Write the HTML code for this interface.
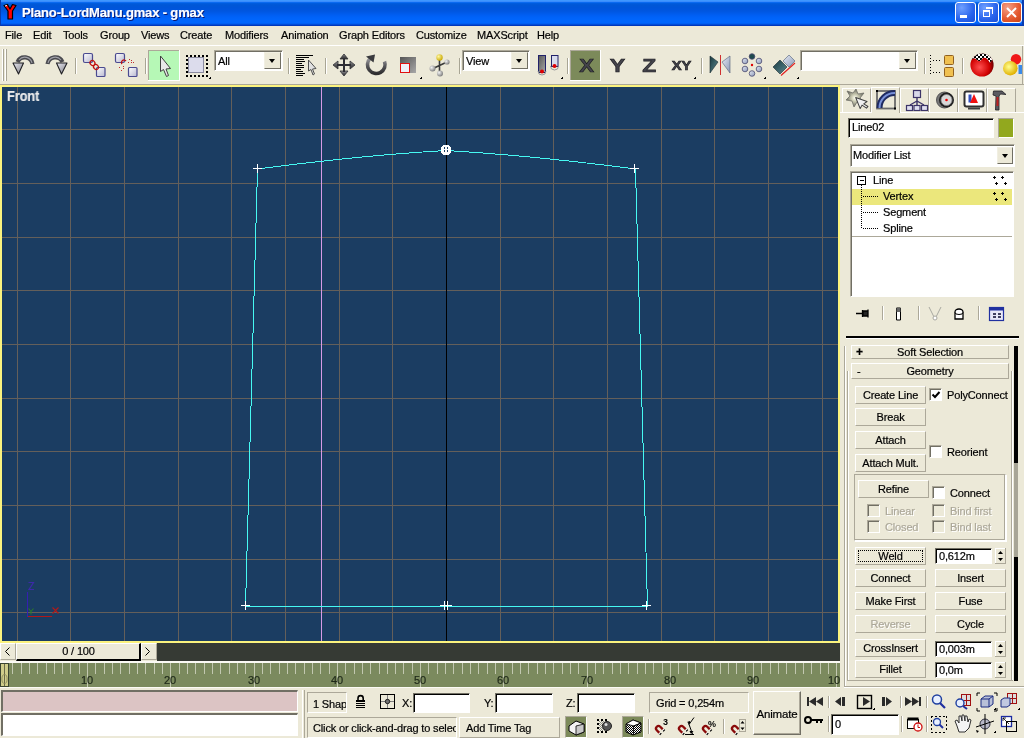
<!DOCTYPE html>
<html><head><meta charset="utf-8"><style>
*{margin:0;padding:0;box-sizing:border-box}
html,body{width:1024px;height:738px;overflow:hidden;background:#ECE9D8;font-family:"Liberation Sans",sans-serif;font-size:11px;color:#000;position:relative;letter-spacing:-0.15px;-webkit-text-stroke:0.2px currentColor}
.a{position:absolute}
.tx{position:absolute;white-space:nowrap;line-height:12px;will-change:transform}
#title{left:0;top:0;width:1024px;height:26px;background:linear-gradient(#3f97ff 0px,#3f97ff 1px,#3a8cfc 1px,#3a8cfc 2px,#0a6af0 2px,#0a6af0 3px,#005ee0 3px,#0057d6 5px,#0055da 8px,#0056e0 11px,#005ae9 13px,#005ef2 15px,#0062f8 17px,#0066fd 20px,#0066fd 23px,#0058e8 24px,#0040c8 25px,#002fb0 26px)}
.wb{top:2px;width:21px;height:21px;border:1px solid #fff;border-radius:3px}
.dd{position:absolute;background:#fff;border-style:solid;border-width:1px;border-color:#aca899 #fff #fff #aca899;box-shadow:inset 1px 1px 0 #716f64}
.ddb{position:absolute;top:1px;right:1px;bottom:1px;width:17px;background:#ECE9D8;border-style:solid;border-width:1px;border-color:#f1efe2 #716f64 #716f64 #f1efe2}
.ddb:after{content:"";position:absolute;left:4px;top:6px;border-style:solid;border-width:4px 3.5px 0 3.5px;border-color:#000 transparent transparent transparent}
.bt{position:absolute;background:#ECE9D8;border-style:solid;border-width:1px;border-color:#fff #aca899 #aca899 #fff;text-align:center;line-height:16px;white-space:nowrap;will-change:transform}
.fld{position:absolute;background:#fff;border-style:solid;border-width:1px;border-color:#716f64 #fff #fff #716f64;box-shadow:inset 1px 1px 0 #000;white-space:nowrap;line-height:14px;padding-left:3px;will-change:transform}
.cb{position:absolute;width:13px;height:13px;background:#fff;border-style:solid;border-width:1px;border-color:#aca899 #fff #fff #aca899;box-shadow:inset 1px 1px 0 #716f64}
.cbd{background:#ECE9D8}
.dis{color:#aca899;text-shadow:1px 1px 0 #fff}
</style></head><body>
<div id="title" class="a">
<div class="a" style="left:0;top:0;width:1px;height:26px;background:#0a3cb0"></div>
<div class="a" style="right:0;top:0;width:2px;height:26px;background:#0a3cb0"></div>
<svg class="a" style="left:2px;top:3px" width="17" height="18" viewBox="0 0 17 18"><path d="M2 2.5 L5.5 1.5 L8 6 L10.5 1.5 L14 2.5 L10.5 8 L10.5 16 L6 16 L6 8 Z" fill="#ff0000" stroke="#000" stroke-width="1.2" stroke-linejoin="round"/><path d="M3 3 L5 2.5" stroke="#fff" stroke-width="1"/></svg>
<div class="tx" style="left:22px;top:6px;color:#fff;font-weight:bold;font-size:13px;line-height:14px;text-shadow:1px 1px 0 #0a1870">Plano-LordManu.gmax - gmax</div>
<div class="a wb" style="left:955px;background:radial-gradient(circle at 30% 25%,#6fa0ff,#2863ec 60%,#1a50d8)"><div class="a" style="left:4px;top:12px;width:7px;height:3px;background:#fff"></div></div>
<div class="a wb" style="left:978px;background:radial-gradient(circle at 30% 25%,#6fa0ff,#2863ec 60%,#1a50d8)"><div class="a" style="left:4px;top:7px;width:7px;height:7px;border:1px solid #fff;border-top-width:2px"></div><div class="a" style="left:7px;top:4px;width:7px;height:7px;border:1px solid #fff;border-top-width:2px;border-left:none;border-bottom:none"></div></div>
<div class="a wb" style="left:1001px;background:radial-gradient(circle at 30% 25%,#f4a088,#e4582e 60%,#c84418)"><svg class="a" style="left:3px;top:3px" width="13" height="13"><path d="M2 2L11 11M11 2L2 11" stroke="#fff" stroke-width="2"/></svg></div>
</div>

<div class="a" style="left:0;top:45px;width:1024px;height:1px;background:#fff"></div>
<div class="tx" style="left:5px;top:29px">File</div>
<div class="tx" style="left:33px;top:29px">Edit</div>
<div class="tx" style="left:63px;top:29px">Tools</div>
<div class="tx" style="left:100px;top:29px">Group</div>
<div class="tx" style="left:141px;top:29px">Views</div>
<div class="tx" style="left:180px;top:29px">Create</div>
<div class="tx" style="left:225px;top:29px">Modifiers</div>
<div class="tx" style="left:281px;top:29px">Animation</div>
<div class="tx" style="left:339px;top:29px">Graph Editors</div>
<div class="tx" style="left:416px;top:29px">Customize</div>
<div class="tx" style="left:477px;top:29px">MAXScript</div>
<div class="tx" style="left:537px;top:29px">Help</div>

<svg class="a" style="left:0;top:0" width="1024" height="86">
<defs>
<linearGradient id="gd" x1="0" y1="0" x2="0" y2="1"><stop offset="0" stop-color="#9a9a9e"/><stop offset=".5" stop-color="#56565a"/><stop offset="1" stop-color="#2e2e30"/></linearGradient>
<linearGradient id="gbox" x1="0" y1="0" x2="1" y2="1"><stop offset="0" stop-color="#fff"/><stop offset="1" stop-color="#b8b8d0"/></linearGradient>
<linearGradient id="gsc" x1="0" y1="0" x2="1" y2="1"><stop offset="0" stop-color="#555"/><stop offset="1" stop-color="#a8a8a8"/></linearGradient>
<radialGradient id="gball" cx=".35" cy=".35" r=".7"><stop offset="0" stop-color="#f4f4f4"/><stop offset="1" stop-color="#7a7a7a"/></radialGradient>
<radialGradient id="gyb" cx=".35" cy=".35" r=".7"><stop offset="0" stop-color="#fff7a0"/><stop offset="1" stop-color="#c8a800"/></radialGradient>
<radialGradient id="gred" cx=".4" cy=".6" r=".6"><stop offset="0" stop-color="#ff5050"/><stop offset=".7" stop-color="#d00000"/><stop offset="1" stop-color="#700000"/></radialGradient>
<radialGradient id="gylw" cx=".4" cy=".4" r=".6"><stop offset="0" stop-color="#ffff90"/><stop offset="1" stop-color="#e0b000"/></radialGradient>
<linearGradient id="gteal" x1="0" y1="0" x2="1" y2="1"><stop offset="0" stop-color="#1a3a40"/><stop offset="1" stop-color="#5a8890"/></linearGradient>
<linearGradient id="glb" x1="0" y1="0" x2="1" y2="1"><stop offset="0" stop-color="#e8ecf4"/><stop offset="1" stop-color="#8a98b8"/></linearGradient>
</defs>
<g shape-rendering="crispEdges">
<path d="M2.5 49V81M5.5 49V81" stroke="#fff"/><path d="M3.5 49V81M6.5 49V81" stroke="#a8a594"/>
<path d="M75.5 58V74M145.5 58V74M288.5 58V74M325.5 58V74M459.5 58V74M567.5 58V74M701.5 58V74M924.5 58V74M962.5 58V74" stroke="#a8a594"/>
<path d="M76.5 58V74M146.5 58V74M289.5 58V74M326.5 58V74M460.5 58V74M568.5 58V74M702.5 58V74M925.5 58V74M963.5 58V74" stroke="#fff"/>
<rect x="148" y="50" width="32" height="31" fill="#fff"/><rect x="148" y="50" width="31" height="30" fill="#aca899"/><rect x="149" y="51" width="30" height="29" fill="#b6f8b6"/>
<rect x="570" y="50" width="31" height="31" fill="#fff"/><rect x="570" y="50" width="30" height="30" fill="#aca899"/><rect x="571" y="51" width="29" height="29" fill="#7c8a5a"/>
</g>
<!-- undo / redo -->
<defs>
<linearGradient id="garcR" x1="0" y1="0" x2="1" y2="0"><stop offset="0" stop-color="#36363c"/><stop offset=".7" stop-color="#9a9aa2"/><stop offset="1" stop-color="#c8c8d0"/></linearGradient>
<linearGradient id="garcL" x1="1" y1="0" x2="0" y2="0"><stop offset="0" stop-color="#36363c"/><stop offset=".7" stop-color="#9a9aa2"/><stop offset="1" stop-color="#c8c8d0"/></linearGradient>
<linearGradient id="ghead" x1="0" y1="0" x2="1" y2="1"><stop offset="0" stop-color="#e8e8f0"/><stop offset="1" stop-color="#808088"/></linearGradient>
</defs>
<path d="M47.5 64 A7.9 7.9 0 0 1 62.5 62" fill="none" stroke="#4a4a50" stroke-width="4.2"/><path d="M48 63 A7.4 7.4 0 0 1 61 60" fill="none" stroke="#a0a0a8" stroke-width="1.1"/>
<path d="M56.5 63 L67 63 L61.5 74 Z" fill="url(#ghead)" stroke="#202024" stroke-width="1.1" stroke-linejoin="round"/>
<path d="M32.5 64 A7.9 7.9 0 0 0 17.5 62" fill="none" stroke="#4a4a50" stroke-width="4.2"/><path d="M32 63 A7.4 7.4 0 0 0 19 60" fill="none" stroke="#a0a0a8" stroke-width="1.1"/>
<path d="M23.5 63 L13 63 L18.5 74 Z" fill="url(#ghead)" stroke="#202024" stroke-width="1.1" stroke-linejoin="round"/>
<!-- link -->
<g stroke="#4a4a90" stroke-width="1.2">
<rect x="83.5" y="53.5" width="9" height="9" rx="1.5" fill="url(#gbox)"/>
<rect x="96.5" y="67.5" width="8.5" height="9" rx="1" fill="url(#gbox)"/>
<rect x="115.5" y="53.5" width="9" height="9" rx="1.5" fill="url(#gbox)"/>
<rect x="128.5" y="67.5" width="8.5" height="9" rx="1" fill="url(#gbox)"/>
</g>
<g fill="none" stroke="#c01010" stroke-width="1.3">
<ellipse cx="92.5" cy="63" rx="2.3" ry="2.6" transform="rotate(-45 92.5 63)"/>
<ellipse cx="96" cy="67" rx="2.3" ry="2.6" transform="rotate(-45 96 67)"/>
<path d="M122 64 A2.5 2.5 0 0 1 126 61"/>
</g>
<g fill="#c03030"><rect x="129" y="59" width="1" height="1"/><rect x="131" y="60" width="1" height="1"/><rect x="128" y="62" width="1" height="1"/><rect x="131" y="62" width="1" height="1"/><rect x="133" y="62" width="1" height="1"/><rect x="119" y="67" width="1" height="1"/><rect x="123" y="66" width="1" height="1"/><rect x="123" y="68" width="1" height="1"/><rect x="121" y="70" width="1" height="1"/></g>
<!-- select arrow -->
<path d="M160.5 56 L160.5 71.5 L163.5 69.5 L166.5 76.5 L168.5 75.5 L166 69 L170.5 68.5 Z" fill="#e8e8e8" stroke="#404040" stroke-width="1" stroke-linejoin="round"/>
<!-- region select -->
<rect x="188.5" y="57.5" width="15" height="15" fill="#dcdcec" stroke="#8c8ca0"/>
<g fill="#000" shape-rendering="crispEdges">
<path d="M186 55h2v2h-2zM190 55h2v2h-2zM194 55h2v2h-2zM198 55h2v2h-2zM202 55h2v2h-2zM206 55h2v2h-2zM186 75h2v2h-2zM190 75h2v2h-2zM194 75h2v2h-2zM198 75h2v2h-2zM202 75h2v2h-2zM206 75h2v2h-2zM186 59h2v2h-2zM186 63h2v2h-2zM186 67h2v2h-2zM186 71h2v2h-2zM206 59h2v2h-2zM206 63h2v2h-2zM206 67h2v2h-2zM206 71h2v2h-2z"/>
<path d="M209 79h2v-2h-1v1h-1z"/>
<path d="M420 79h2v-2h-1v1h-1z"/><path d="M561 79h2v-2h-1v1h-1z"/><path d="M694 79h2v-2h-1v1h-1z"/><path d="M764 79h2v-2h-1v1h-1z"/><path d="M797 79h2v-2h-1v1h-1z"/>
</g>
<!-- select by name -->
<g fill="#000" shape-rendering="crispEdges">
<rect x="296" y="55" width="17" height="1"/><rect x="296" y="57" width="13" height="1"/><rect x="296" y="59" width="8" height="1"/><rect x="296" y="61" width="9" height="1"/><rect x="296" y="63" width="6" height="1"/><rect x="296" y="65" width="8" height="1"/><rect x="296" y="67" width="8" height="1"/><rect x="296" y="69" width="5" height="1"/><rect x="296" y="71" width="7" height="1"/><rect x="296" y="73" width="9" height="1"/><rect x="296" y="75" width="7" height="1"/>
</g>
<path d="M308.5 60 L308.5 71 L311 69.5 L313 75 L314.5 74 L312.5 69 L316 68.5 Z" fill="#e0e0e0" stroke="#505050" stroke-width="1" stroke-linejoin="round"/>
<!-- move -->
<g fill="url(#gd)" stroke="#303034" stroke-width=".8">
<path d="M344 54 L348 59 L340 59 Z"/><path d="M344 76 L348 71 L340 71 Z"/><path d="M333 65 L338 61 L338 69 Z"/><path d="M355 65 L350 61 L350 69 Z"/>
</g>
<path d="M343 58h2v14h-2zM337 64h14v2h-14z" fill="#2e2e34"/>
<!-- rotate -->
<path d="M384.5 61.5 A8.8 8.8 0 1 1 370 58.5" fill="none" stroke="url(#gd)" stroke-width="3.6"/>
<path d="M366 56.5 L375 54.5 L373.5 62.5 Z" fill="#3a3a3e"/>
<!-- scale -->
<rect x="400" y="57" width="16" height="16" fill="url(#gsc)"/>
<rect x="400.5" y="63.5" width="9" height="9" fill="#eef0f8" stroke="#e01010"/>
<!-- pivot -->
<path d="M439.5 58 L439.5 73 M433 68.5 L447 62" stroke="#3a3a3a" stroke-width="1.6"/>
<circle cx="439.5" cy="57.5" r="3.2" fill="url(#gyb)"/>
<circle cx="447" cy="62" r="2.6" fill="url(#gball)"/>
<circle cx="432.5" cy="68.5" r="3" fill="url(#gball)"/>
<circle cx="440" cy="73.5" r="3" fill="url(#gball)"/>
<!-- use center -->
<rect x="538.5" y="55.5" width="7" height="17" fill="url(#gsc)" stroke="#22226a"/>
<rect x="551.5" y="55.5" width="6.5" height="11" fill="#d8dcec" stroke="#22226a"/>
<circle cx="542" cy="71.5" r="2" fill="#e00000"/><circle cx="554.5" cy="66" r="2" fill="#e00000"/>
<path d="M538 71 A4 4 0 0 0 546 71" fill="none" stroke="#999" /><path d="M550.5 66 A4 4 0 0 0 558.5 66" fill="none" stroke="#999"/>
<!-- XYZ -->
<g font-family="Liberation Sans" font-weight="bold" fill="#44444c" stroke="#1c1c20" stroke-width=".6">
<text transform="translate(579.3 72.3) scale(1.17 1)" font-size="19">X</text>
<text transform="translate(609.8 72.3) scale(1.22 1)" font-size="19">Y</text>
<text transform="translate(642.2 72.3) scale(1.2 1)" font-size="19">Z</text>
<text transform="translate(671.7 69.6) scale(1.12 1)" font-size="13.2">XY</text>
</g>
<!-- mirror -->
<path d="M710 56 L718 62 L710 73 Z" fill="url(#gteal)" stroke="#1a2a30" stroke-width=".6"/>
<path d="M730 56 L722 62 L730 73 Z" fill="url(#glb)" stroke="#50607a" stroke-width=".6"/>
<path d="M720.5 55V75" stroke="#d03030" stroke-width="1"/>
<!-- array -->
<g stroke="#4a4a70" stroke-width=".8">
<circle cx="752" cy="56.5" r="2.8" fill="#1f4a4e"/>
<circle cx="745" cy="61" r="2.8" fill="url(#glb)"/><circle cx="759" cy="61" r="2.8" fill="url(#glb)"/>
<circle cx="745" cy="69" r="2.8" fill="url(#glb)"/><circle cx="759" cy="69" r="2.8" fill="url(#glb)"/>
<circle cx="752" cy="73.5" r="2.8" fill="url(#glb)"/>
</g>
<circle cx="752" cy="65" r="1.2" fill="#e00000"/>
<!-- align -->
<path d="M773 67 L780 60 L787 67 L780 74 Z" fill="url(#gteal)" stroke="#1a2a30" stroke-width=".6"/>
<path d="M783 61 L789 55 L795 61 L789 67 Z" fill="url(#glb)" stroke="#50607a" stroke-width=".6"/>
<path d="M781 75.5 L795 63" stroke="#e02020" stroke-width="1.2"/>
<!-- schematic -->
<g fill="#000" shape-rendering="crispEdges">
<path d="M930 55h1v1h-1zM930 58h1v1h-1zM930 61h1v1h-1zM930 64h1v1h-1zM930 67h1v1h-1zM930 70h1v1h-1zM930 73h1v1h-1zM933 60h1v1h-1zM936 60h1v1h-1zM939 60h1v1h-1zM933 72h1v1h-1zM936 72h1v1h-1zM939 72h1v1h-1z"/>
</g>
<rect x="944.5" y="55.5" width="9" height="9" rx="1" fill="#f0c050" stroke="#906020"/>
<rect x="944.5" y="67.5" width="9" height="9" rx="1" fill="#f0c050" stroke="#906020"/>
<!-- material editor -->
<defs><clipPath id="cmat"><path d="M968 52 H996 V60 Q992 58 990 63 Q987 57 983 58 Q980 63 977 60 Q974 56 970 61 H968 Z"/></clipPath>
<clipPath id="csph"><circle cx="982" cy="65" r="11.5"/></clipPath></defs>
<circle cx="982" cy="65" r="11.6" fill="url(#gred)"/>
<g clip-path="url(#csph)"><g clip-path="url(#cmat)"><rect x="968" y="50" width="30" height="14" fill="#fff"/><path d="M970 52h2v2h-2zM974 52h2v2h-2zM978 52h2v2h-2zM982 52h2v2h-2zM986 52h2v2h-2zM990 52h2v2h-2zM994 52h2v2h-2zM972 54h2v2h-2zM976 54h2v2h-2zM980 54h2v2h-2zM984 54h2v2h-2zM988 54h2v2h-2zM992 54h2v2h-2zM970 56h2v2h-2zM974 56h2v2h-2zM978 56h2v2h-2zM982 56h2v2h-2zM986 56h2v2h-2zM990 56h2v2h-2zM994 56h2v2h-2zM972 58h2v2h-2zM976 58h2v2h-2zM980 58h2v2h-2zM984 58h2v2h-2zM988 58h2v2h-2zM992 58h2v2h-2zM970 60h2v2h-2zM974 60h2v2h-2zM978 60h2v2h-2zM982 60h2v2h-2zM986 60h2v2h-2zM990 60h2v2h-2zM994 60h2v2h-2zM972 62h2v2h-2zM976 62h2v2h-2zM980 62h2v2h-2zM984 62h2v2h-2zM988 62h2v2h-2zM992 62h2v2h-2z" fill="#000"/></g></g>
<!-- render -->
<circle cx="1016" cy="59.2" r="5.2" fill="#f01818"/>
<rect x="1018.5" y="65" width="4" height="9" fill="#3a8ae8"/>
<circle cx="1010.3" cy="68.2" r="7.3" fill="url(#gylw)"/>
</svg>

<div class="dd" style="left:214px;top:50px;width:69px;height:21px"><div class="tx" style="left:3px;top:4px">All</div><div class="ddb"></div></div>
<div class="dd" style="left:462px;top:50px;width:68px;height:21px"><div class="tx" style="left:3px;top:4px">View</div><div class="ddb"></div></div>
<div class="dd" style="left:800px;top:50px;width:118px;height:21px"><div class="ddb"></div></div>
<div class="a" style="left:0;top:84px;width:840px;height:1px;background:#aca899"></div>
<div class="a" style="left:1022px;top:46px;width:1px;height:38px;background:#aca899"></div>

<svg class="a" style="left:0;top:0" width="840" height="643" shape-rendering="crispEdges">
<rect x="0" y="85" width="840" height="558" fill="#fbf37e"/>
<rect x="2" y="87" width="836" height="554" fill="#1b3d62"/>
<g stroke="#645f5a" stroke-width="1">
<path d="M2 129.5H838"/>
<path d="M2 183.5H838"/>
<path d="M2 237.5H838"/>
<path d="M2 290.5H838"/>
<path d="M2 344.5H838"/>
<path d="M2 398.5H838"/>
<path d="M2 451.5H838"/>
<path d="M2 505.5H838"/>
<path d="M2 559.5H838"/>
<path d="M2 612.5H838"/>
<path d="M17.5 87V641"/>
<path d="M70.5 87V641"/>
<path d="M124.5 87V641"/>
<path d="M178.5 87V641"/>
<path d="M231.5 87V641"/>
<path d="M285.5 87V641"/>
<path d="M339.5 87V641"/>
<path d="M392.5 87V641"/>
<path d="M500.5 87V641"/>
<path d="M553.5 87V641"/>
<path d="M607.5 87V641"/>
<path d="M661.5 87V641"/>
<path d="M714.5 87V641"/>
<path d="M768.5 87V641"/>
<path d="M822.5 87V641"/>
</g>
<path d="M321.5 87V641" stroke="#d69ae6"/>
<path d="M446.5 87V641" stroke="#000"/>
</svg>
<svg class="a" style="left:0;top:0" width="840" height="643">
<g fill="none" stroke="#46f8f2" stroke-width="1" shape-rendering="crispEdges">
<path d="M257.5 169 Q360 155.5 446 150.5 Q532 155.5 635.5 169 L647.5 606.5 L245.5 606.5 Z"/>
</g>
<g stroke="#fff" stroke-width="1" shape-rendering="crispEdges">
<path d="M253 168.5h9M257.5 164v9"/>
<path d="M630 168.5h9M634.5 164v9"/>
<path d="M646.5 601v9"/>
<path d="M241 605.5h9M245.5 601v9"/>
<path d="M642 605.5h9"/>
<path d="M440 605.5h12M444.5 601v9M447.5 601v9"/>
</g>
<g shape-rendering="crispEdges">
<path d="M443 145h6v1h1v1h1v6h-1v1h-1v1h-6v-1h-1v-1h-1v-6h1v-1h1z" fill="#fff"/>
<path d="M444 147h1v2h-1zM447 147h1v2h-1zM444 150h1v2h-1zM447 150h1v2h-1z" fill="#1b3d62"/>
</g>
</svg>
<div class="tx" style="left:7px;top:89px;color:#ececec;font-weight:bold;font-size:14px;line-height:15px;transform:scaleX(.92);transform-origin:0 0">Front</div><svg class="a" style="left:0;top:570px" width="70" height="60" shape-rendering="crispEdges">
<path d="M27.5 22V47" stroke="#3420b0"/>
<path d="M28 46.5H52" stroke="#b01818"/>
<path d="M28.5 12.5h5l-4.5 7h5" fill="none" stroke="#3c2aa8" stroke-width="1.2" shape-rendering="auto"/>
<path d="M52.5 37.5l6 6M58.5 37.5l-6 6" fill="none" stroke="#b01a1a" stroke-width="1.2" shape-rendering="auto"/>
<path d="M28.5 38.5l2.5 3l2.5-3M31 41.5v3" fill="none" stroke="#2a7a2a" stroke-width="1.1" shape-rendering="auto"/>
</svg>

<!-- command panel -->
<div class="a" style="left:840px;top:84px;width:184px;height:1px;background:#aca899"></div>
<!-- tabs -->
<div class="a" style="left:840px;top:112px;width:184px;height:1px;background:#fff"></div>
<div class="a" style="left:842px;top:88px;width:29px;height:24px;border-style:solid;border-width:1px 1px 0 1px;border-color:#fff #aca899 #aca899 #fff"></div>
<div class="a" style="left:871px;top:87px;width:29px;height:26px;background:#ECE9D8;border-style:solid;border-width:1px 1px 0 1px;border-color:#fff #aca899 #aca899 #fff"></div>
<div class="a" style="left:900px;top:88px;width:29px;height:24px;border-style:solid;border-width:1px 1px 0 1px;border-color:#fff #aca899 #aca899 #fff"></div>
<div class="a" style="left:929px;top:88px;width:29px;height:24px;border-style:solid;border-width:1px 1px 0 1px;border-color:#fff #aca899 #aca899 #fff"></div>
<div class="a" style="left:958px;top:88px;width:29px;height:24px;border-style:solid;border-width:1px 1px 0 1px;border-color:#fff #aca899 #aca899 #fff"></div>
<div class="a" style="left:987px;top:88px;width:29px;height:24px;border-style:solid;border-width:1px 1px 0 1px;border-color:#fff #aca899 #aca899 #fff"></div>
<svg class="a" style="left:840px;top:84px" width="184" height="30">
<defs>
<radialGradient id="gstar" cx=".5" cy=".5" r=".5"><stop offset="0" stop-color="#fffff0"/><stop offset=".4" stop-color="#c8c8b0"/><stop offset="1" stop-color="#6a6a60"/></radialGradient>
</defs>
<!-- create -->
<path d="M7 7 L13 9 L16 5 L18 10 L24 9 L20 14 L23 19 L17 18 L14 23 L12 17 L6 16 L10 12 Z" fill="url(#gstar)" stroke="#707068" stroke-width=".8"/>
<path d="M16 13 L16 25 L19 22.5 L22 27 L24 26 L21 22 L25 21 Z" fill="#f0f0f0" stroke="#404040" stroke-width="1" stroke-linejoin="round" transform="rotate(-22 17 14)"/>
<!-- modify -->
<rect x="37" y="7" width="18" height="17.5" fill="none" stroke="#6a6a6a" stroke-width="1.8"/>
<rect x="36" y="6" width="2" height="2" fill="#000"/><rect x="54" y="23.5" width="2" height="2" fill="#000"/>
<path d="M39.5 24 A15 15 0 0 1 55 9" fill="none" stroke="#1e2a60" stroke-width="6"/>
<path d="M39.5 24 A15 15 0 0 1 55 9" fill="none" stroke="#7890d8" stroke-width="2"/>
<!-- hierarchy -->
<g stroke="#3c3468" stroke-width="1.2">
<rect x="73.5" y="6.5" width="7" height="7" fill="#d8d8e8"/>
<path d="M77 13.5V21M77 17L70 21M77 17L84 21" fill="none" stroke-width="1.4"/>
<rect x="66.5" y="21.5" width="6" height="5" fill="#e0e0f0"/><rect x="74" y="21.5" width="6" height="5" fill="#e0e0f0"/><rect x="81.5" y="21.5" width="6" height="5" fill="#e0e0f0"/>
</g>
<!-- motion -->
<circle cx="104.5" cy="16" r="8" fill="#777" stroke="#555"/>
<circle cx="106.5" cy="16" r="7.5" fill="#202020"/>
<circle cx="106.5" cy="16" r="5.5" fill="#d8d8d8" stroke="#888" stroke-width=".8"/>
<circle cx="106.5" cy="16" r="1.3" fill="#f00000"/>
<!-- display -->
<rect x="124.5" y="7.5" width="19" height="15" rx="2" fill="#fff" stroke="#303030" stroke-width="2"/>
<path d="M128 24.5h12" stroke="#404040" stroke-width="2"/>
<rect x="128.5" y="10.5" width="3" height="8" fill="#3050c0"/>
<path d="M130 19 L134 10 L138 19 Z" fill="#f01010"/>
<!-- utilities -->
<path d="M153.5 7 L162 7 L166 10.5 L160.5 10 L159 12 L159 26 L155.5 26 L156 12 L153 11 Z" fill="#5a5a60" stroke="#202024" stroke-width=".8"/>
<path d="M156.5 13 L158.5 13 L158.5 22 L156.5 22 Z" fill="#c02020"/>
</svg>
<!-- name field -->
<div class="fld" style="left:848px;top:118px;width:146px;height:20px;line-height:17px">Line02</div>
<div class="a" style="left:998px;top:118px;width:16px;height:20px;background:#92a81e;border-style:solid;border-width:1px;border-color:#aca899 #fff #fff #aca899"></div>
<!-- modifier list -->
<div class="dd" style="left:850px;top:144px;width:165px;height:23px"><div class="tx" style="left:2px;top:4px">Modifier List</div><div class="ddb" style="top:2px;bottom:2px;right:1px;width:16px"></div></div>
<!-- stack -->
<div class="a" style="left:850px;top:171px;width:164px;height:126px;background:#fff;border-style:solid;border-width:1px;border-color:#aca899 #fff #fff #aca899;box-shadow:inset 1px 1px 0 #716f64"></div>
<div class="a" style="left:852px;top:189px;width:160px;height:16px;background:#ebe77c"></div>
<div class="a" style="left:852px;top:236px;width:160px;height:1px;background:#aca899"></div>
<svg class="a" style="left:850px;top:171px" width="164" height="70" shape-rendering="crispEdges">
<rect x="7.5" y="5.5" width="8" height="8" fill="#fff" stroke="#000"/>
<path d="M9.5 9.5h4" stroke="#000"/>
<g fill="#000">
<path d="M11 14h1v1h-1zM11 16h1v1h-1zM11 18h1v1h-1zM11 20h1v1h-1zM11 22h1v1h-1zM11 24h1v1h-1zM11 26h1v1h-1zM11 28h1v1h-1zM11 30h1v1h-1zM11 32h1v1h-1zM11 34h1v1h-1zM11 36h1v1h-1zM11 38h1v1h-1zM11 40h1v1h-1zM11 42h1v1h-1zM11 44h1v1h-1zM11 46h1v1h-1zM11 48h1v1h-1zM11 50h1v1h-1zM11 52h1v1h-1zM11 54h1v1h-1zM11 56h1v1h-1z"/>
<path d="M13 25h1v1h-1zM15 25h1v1h-1zM17 25h1v1h-1zM19 25h1v1h-1zM21 25h1v1h-1zM23 25h1v1h-1zM25 25h1v1h-1zM27 25h1v1h-1z"/>
<path d="M13 41h1v1h-1zM15 41h1v1h-1zM17 41h1v1h-1zM19 41h1v1h-1zM21 41h1v1h-1zM23 41h1v1h-1zM25 41h1v1h-1zM27 41h1v1h-1z"/>
<path d="M13 57h1v1h-1zM15 57h1v1h-1zM17 57h1v1h-1zM19 57h1v1h-1zM21 57h1v1h-1zM23 57h1v1h-1zM25 57h1v1h-1zM27 57h1v1h-1z"/>
<path d="M143 6h3v1h-3zM144 5h1v3h-1zM151 6h3v1h-3zM152 5h1v3h-1zM145 12h3v1h-3zM146 11h1v3h-1zM154 12h3v1h-3zM155 11h1v3h-1zM143 22h3v1h-3zM144 21h1v3h-1zM151 22h3v1h-3zM152 21h1v3h-1zM145 28h3v1h-3zM146 27h1v3h-1zM154 28h3v1h-3zM155 27h1v3h-1z"/>
</g>
</svg>
<div class="tx" style="left:873px;top:174px">Line</div>
<div class="tx" style="left:883px;top:190px">Vertex</div>
<div class="tx" style="left:883px;top:206px">Segment</div>
<div class="tx" style="left:883px;top:222px">Spline</div>
<!-- stack icons -->
<svg class="a" style="left:850px;top:300px" width="170" height="26">
<g shape-rendering="crispEdges">
<path d="M32.5 6V20M68.5 6V20M128.5 6V20" stroke="#aca899"/>
<path d="M33.5 6V20M69.5 6V20M129.5 6V20" stroke="#fff"/>
</g>
<path d="M6 13.5h6M12.5 10v7M13 11h5v5h-5zM18 9.5v8" stroke="#000" stroke-width="1.3" fill="#222"/>
<path d="M46.5 8h4v12h-4z" fill="#fff" stroke="#000"/><path d="M46.5 8h4v4h-4z" fill="#666"/>
<path d="M79 7 L85 19 L91 7" fill="none" stroke="#a8a8a0" stroke-width="1"/><circle cx="85" cy="18" r="2" fill="#fff" stroke="#a8a8a0"/>
<path d="M105 12 A4 3 0 0 1 113 12 L113 19 L105 19 Z" fill="#fff" stroke="#000" stroke-width="1.3"/><path d="M105 12.5 A4 2 0 0 0 113 12.5" fill="none" stroke="#000"/>
<rect x="139.5" y="7.5" width="14" height="13" fill="#e8e8f8" stroke="#2030a0" stroke-width="1.2"/><rect x="139.5" y="7.5" width="14" height="3" fill="#2030a0"/>
<g fill="#404060"><rect x="143" y="13" width="3" height="2"/><rect x="148" y="13" width="3" height="2"/><rect x="143" y="16" width="3" height="2"/><rect x="148" y="16" width="3" height="2"/></g>
</svg>
<!-- separator bar -->
<div class="a" style="left:846px;top:336px;width:173px;background:#000;border-bottom:1px solid #fff;height:3px"></div>
<!-- rollouts -->
<div class="a" style="left:844px;top:346px;width:1px;height:340px;background:#aca899"></div>
<div class="a" style="left:845px;top:346px;width:1px;height:340px;background:#fff"></div>
<div class="bt" style="left:851px;top:345px;width:158px;height:14px;line-height:12px"><span class="a" style="left:4px;top:0;font-weight:bold;font-size:12px">+</span>Soft Selection</div>
<div class="bt" style="left:851px;top:363px;width:158px;height:16px;line-height:14px"><span class="a" style="left:5px;top:0">-</span>Geometry</div>
<div class="a" style="left:847px;top:371px;width:1px;height:310px;background:#aca899"></div>
<div class="a" style="left:848px;top:371px;width:1px;height:310px;background:#fff"></div>
<div class="a" style="left:1011px;top:371px;width:1px;height:310px;background:#aca899"></div>
<div class="a" style="left:1012px;top:371px;width:1px;height:310px;background:#fff"></div>
<div class="a" style="left:847px;top:680px;width:166px;height:1px;background:#aca899"></div>
<div class="a" style="left:844px;top:686px;width:180px;height:1px;background:#aca899"></div>
<div class="a" style="left:844px;top:687px;width:180px;height:1px;background:#fff"></div>
<!-- scrollbar -->
<div class="a" style="left:1014px;top:346px;width:4px;height:117px;background:#000"></div>
<div class="a" style="left:1014px;top:463px;width:4px;height:94px;background:#a8a596"></div>
<div class="a" style="left:1014px;top:557px;width:4px;height:124px;background:#000"></div>
<!-- geometry contents -->
<div class="bt" style="left:855px;top:386px;width:71px;height:18px">Create Line</div>
<div class="cb" style="left:929px;top:388px"><svg class="a" style="left:1px;top:1px" width="10" height="10"><path d="M1.5 4.5 L4 7 L8.5 2" fill="none" stroke="#000" stroke-width="2"/></svg></div>
<div class="tx" style="left:947px;top:389px">PolyConnect</div>
<div class="bt" style="left:855px;top:408px;width:71px;height:18px">Break</div>
<div class="bt" style="left:855px;top:431px;width:71px;height:18px">Attach</div>
<div class="cb" style="left:929px;top:445px"></div>
<div class="tx" style="left:947px;top:446px">Reorient</div>
<div class="bt" style="left:855px;top:454px;width:71px;height:18px">Attach Mult.</div>
<div class="a" style="left:854px;top:474px;width:152px;height:67px;border-style:solid;border-width:1px;border-color:#aca899 #fff #fff #aca899;box-shadow:inset -1px -1px 0 #aca899, 1px 1px 0 #fff"></div>
<div class="bt" style="left:858px;top:480px;width:71px;height:18px">Refine</div>
<div class="cb" style="left:932px;top:486px"></div>
<div class="tx" style="left:950px;top:487px">Connect</div>
<div class="cb cbd" style="left:867px;top:504px"></div>
<div class="tx dis" style="left:885px;top:505px">Linear</div>
<div class="cb cbd" style="left:932px;top:504px"></div>
<div class="tx dis" style="left:950px;top:505px">Bind first</div>
<div class="cb cbd" style="left:867px;top:520px"></div>
<div class="tx dis" style="left:885px;top:521px">Closed</div>
<div class="cb cbd" style="left:932px;top:520px"></div>
<div class="tx dis" style="left:950px;top:521px">Bind last</div>
<div class="bt" style="left:855px;top:547px;width:71px;height:18px"><div class="a" style="left:2px;top:2px;right:2px;bottom:2px;border:1px dotted #000"></div>Weld</div>
<div class="fld" style="left:935px;top:548px;width:57px;height:16px">0,612m</div>
<div class="bt" style="left:855px;top:569px;width:71px;height:18px">Connect</div>
<div class="bt" style="left:935px;top:569px;width:71px;height:18px">Insert</div>
<div class="bt" style="left:855px;top:592px;width:71px;height:18px">Make First</div>
<div class="bt" style="left:935px;top:592px;width:71px;height:18px">Fuse</div>
<div class="bt dis" style="left:855px;top:615px;width:71px;height:18px">Reverse</div>
<div class="bt" style="left:935px;top:615px;width:71px;height:18px">Cycle</div>
<div class="bt" style="left:855px;top:639px;width:71px;height:18px">CrossInsert</div>
<div class="fld" style="left:935px;top:641px;width:57px;height:16px">0,003m</div>
<div class="bt" style="left:855px;top:660px;width:71px;height:18px">Fillet</div>
<div class="fld" style="left:935px;top:662px;width:57px;height:16px">0,0m</div>
<svg class="a" style="left:995px;top:547px" width="12" height="132">
<g shape-rendering="crispEdges">
<rect x=".5" y="1.5" width="10" height="15" fill="#ECE9D8" stroke="#aca899"/><path d="M.5 16V1.5H10" stroke="#fff" fill="none"/>
<rect x=".5" y="94.5" width="10" height="15" fill="#ECE9D8" stroke="#aca899"/><path d="M.5 109V94.5H10" stroke="#fff" fill="none"/>
<rect x=".5" y="115.5" width="10" height="15" fill="#ECE9D8" stroke="#aca899"/><path d="M.5 130V115.5H10" stroke="#fff" fill="none"/>
</g>
<g fill="#000">
<path d="M3 7h5L5.5 4z"/><path d="M3 11h5L5.5 14z"/>
<path d="M3 100h5L5.5 97z"/><path d="M3 104h5L5.5 107z"/>
<path d="M3 121h5L5.5 118z"/><path d="M3 125h5L5.5 128z"/>
</g>
</svg>

<!-- time slider -->
<div class="a" style="left:0;top:643px;width:840px;height:1px;background:#f4f3ea"></div>
<div class="a" style="left:157px;top:643px;width:683px;height:18px;background:#363a34"></div>
<div class="a" style="left:0;top:643px;width:16px;height:17px;background:#ECE9D8;border-style:solid;border-width:1px;border-color:#fff #aca899 #aca899 #fff"></div>
<div class="a" style="left:141px;top:643px;width:16px;height:17px;background:#ECE9D8;border-style:solid;border-width:1px;border-color:#fff #aca899 #aca899 #fff"></div>
<div class="a" style="left:16px;top:643px;width:125px;height:18px;background:#ECE9D8;border-style:solid;border-width:1px 2px 2px 1px;border-color:#fff #000 #000 #fff"></div>
<svg class="a" style="left:0;top:643px" width="160" height="18" shape-rendering="crispEdges"><path d="M9.5 4.5 L5.5 8.5 L9.5 12.5M145.5 4.5 L149.5 8.5 L145.5 12.5" fill="none" stroke="#000" stroke-width="1" shape-rendering="auto"/></svg>
<div class="tx" style="left:16px;top:645px;width:125px;text-align:center">0 / 100</div>
<div class="a" style="left:0;top:661px;width:840px;height:2px;background:#fbfaf4"></div>
<!-- track bar -->
<div class="a" style="left:0;top:663px;width:840px;height:24px;background:#7b8a5e"></div>
<svg class="a" style="left:0;top:0" width="840" height="738" shape-rendering="crispEdges">
<path d="M12.5 663V674M21.5 663V674M29.5 663V674M37.5 663V674M46.5 663V674M54.5 663V674M62.5 663V674M70.5 663V674M79.5 663V674M87.5 663V687M95.5 663V674M104.5 663V674M112.5 663V674M120.5 663V674M129.5 663V674M137.5 663V674M145.5 663V674M154.5 663V674M162.5 663V674M170.5 663V687M179.5 663V674M187.5 663V674M195.5 663V674M204.5 663V674M212.5 663V674M220.5 663V674M229.5 663V674M237.5 663V674M245.5 663V674M254.5 663V687M262.5 663V674M270.5 663V674M279.5 663V674M287.5 663V674M295.5 663V674M304.5 663V674M312.5 663V674M320.5 663V674M329.5 663V674M337.5 663V687M345.5 663V674M354.5 663V674M362.5 663V674M370.5 663V674M379.5 663V674M387.5 663V674M395.5 663V674M403.5 663V674M412.5 663V674M420.5 663V687M428.5 663V674M437.5 663V674M445.5 663V674M453.5 663V674M462.5 663V674M470.5 663V674M478.5 663V674M487.5 663V674M495.5 663V674M503.5 663V687M512.5 663V674M520.5 663V674M528.5 663V674M537.5 663V674M545.5 663V674M553.5 663V674M562.5 663V674M570.5 663V674M578.5 663V674M587.5 663V687M595.5 663V674M603.5 663V674M612.5 663V674M620.5 663V674M628.5 663V674M637.5 663V674M645.5 663V674M653.5 663V674M662.5 663V674M670.5 663V687M678.5 663V674M687.5 663V674M695.5 663V674M703.5 663V674M712.5 663V674M720.5 663V674M728.5 663V674M736.5 663V674M745.5 663V674M753.5 663V687M761.5 663V674M770.5 663V674M778.5 663V674M786.5 663V674M795.5 663V674M803.5 663V674M811.5 663V674M820.5 663V674M828.5 663V674M836.5 663V687" stroke="#c2c8b0" stroke-width="1"/>
</svg>
<div class="tx" style="left:81.4px;top:674px;color:#1e2818">10</div><div class="tx" style="left:164.4px;top:674px;color:#1e2818">20</div><div class="tx" style="left:248.4px;top:674px;color:#1e2818">30</div><div class="tx" style="left:331.4px;top:674px;color:#1e2818">40</div><div class="tx" style="left:414.4px;top:674px;color:#1e2818">50</div><div class="tx" style="left:497.4px;top:674px;color:#1e2818">60</div><div class="tx" style="left:581.4px;top:674px;color:#1e2818">70</div><div class="tx" style="left:664.4px;top:674px;color:#1e2818">80</div><div class="tx" style="left:747.4px;top:674px;color:#1e2818">90</div><div class="a" style="left:826px;top:674px;width:14px;height:12px;overflow:hidden"><div class="tx" style="left:1.5px;top:0;color:#1e2818">100</div></div>
<div class="a" style="left:0;top:663px;width:9px;height:24px;background:#cfcc8a;border:1px solid #3a4430"></div>
<div class="a" style="left:4px;top:664px;width:1px;height:22px;background:#6a6a48"></div><svg class="a" style="left:0;top:663px" width="9" height="24"><ellipse cx="4.5" cy="16" rx="2.6" ry="4.5" fill="none" stroke="#8a8a5a" stroke-width=".9"/></svg>
<div class="a" style="left:0;top:687px;width:840px;height:1px;background:#fbfaf4"></div>

<!-- status bar -->
<div class="a" style="left:1px;top:690px;width:297px;height:22px;background:#dcc4c4;border-style:solid;border-width:2px 1px 1px 2px;border-color:#716f64 #fff #fff #716f64"></div>
<div class="a" style="left:1px;top:713px;width:297px;height:23px;background:#fff;border-style:solid;border-width:2px 1px 1px 2px;border-color:#716f64 #fff #fff #716f64"></div>
<div class="a" style="left:302px;top:690px;width:1px;height:48px;background:#fff"></div>
<div class="a" style="left:304px;top:690px;width:1px;height:48px;background:#aca899"></div>
<div class="a" style="left:307px;top:692px;width:40px;height:21px;border-style:solid;border-width:1px;border-color:#aca899 #fff #fff #aca899"></div>
<div class="tx" style="left:313px;top:698px;width:33px;overflow:hidden">1 Shape</div>
<div class="a" style="left:307px;top:717px;width:150px;height:21px;border-style:solid;border-width:1px;border-color:#aca899 #fff #fff #aca899;overflow:hidden"><div class="tx" style="left:5px;top:4px">Click or click-and-drag to select objects</div></div>
<div class="a" style="left:459px;top:717px;width:101px;height:21px;border-style:solid;border-width:1px;border-color:#fff #aca899 #aca899 #fff;overflow:hidden"><div class="tx" style="left:6px;top:4px">Add Time Tag</div></div>
<svg class="a" style="left:350px;top:690px" width="60" height="24">
<path d="M8 10.5 V8.2 A2.6 2.6 0 0 1 13.2 8.2 V10.5" fill="none" stroke="#000" stroke-width="1.6"/>
<g fill="#000" shape-rendering="crispEdges"><rect x="6" y="10" width="9" height="2"/><rect x="6" y="13" width="9" height="1"/><rect x="6" y="15" width="9" height="1"/><rect x="6" y="17" width="9" height="1"/></g>
<g shape-rendering="crispEdges"><rect x="30.5" y="4.5" width="14" height="14" fill="none" stroke="#000" stroke-width="1.5"/><path d="M37.5 5V18M31 11.5H44" stroke="#808080"/></g>
<circle cx="37.5" cy="11.5" r="2.2" fill="#707070" stroke="#000" stroke-width=".8"/>
</svg>
<div class="tx" style="left:402px;top:697px">X:</div>
<div class="fld" style="left:413px;top:693px;width:57px;height:20px"></div>
<div class="tx" style="left:484px;top:697px">Y:</div>
<div class="fld" style="left:495px;top:693px;width:58px;height:20px"></div>
<div class="tx" style="left:566px;top:697px">Z:</div>
<div class="fld" style="left:577px;top:693px;width:58px;height:20px"></div>
<div class="a" style="left:649px;top:692px;width:100px;height:21px;border-style:solid;border-width:1px;border-color:#aca899 #fff #fff #aca899"><div class="tx" style="left:6px;top:4px">Grid = 0,254m</div></div>
<!-- bottom toolbar icons -->
<div class="a" style="left:565px;top:716px;width:22px;height:22px;background:#7c8a5a;border-style:solid;border-width:1px;border-color:#aca899 #fff #fff #aca899"></div>
<div class="a" style="left:622px;top:716px;width:22px;height:22px;background:#7c8a5a;border-style:solid;border-width:1px;border-color:#aca899 #fff #fff #aca899"></div>
<svg class="a" style="left:560px;top:714px" width="200" height="24">
<defs><pattern id="chk" width="2" height="2" patternUnits="userSpaceOnUse"><rect width="1" height="1" fill="#000"/><rect x="1" y="1" width="1" height="1" fill="#000"/><rect x="1" width="1" height="1" fill="#fff"/><rect y="1" width="1" height="1" fill="#fff"/></pattern></defs>
<path d="M9 12 L16 7 L24 10 L24 18 L16 21 L9 17 Z" fill="#f4f4f4" stroke="#000" stroke-width="1"/>
<path d="M16 12 L24 10 L24 18 L16 21 Z" fill="#c8c8c8" stroke="#000" stroke-width=".8"/>
<g fill="#000" shape-rendering="crispEdges"><rect x="37" y="5" width="2" height="2"/><rect x="41" y="5" width="2" height="2"/><rect x="45" y="5" width="2" height="2"/><rect x="37" y="9" width="2" height="2"/><rect x="37" y="13" width="2" height="2"/><rect x="37" y="17" width="2" height="2"/><rect x="41" y="17" width="2" height="2"/><rect x="45" y="17" width="2" height="2"/></g>
<rect x="39" y="7" width="6" height="10" fill="url(#chk)" opacity=".4"/>
<circle cx="47" cy="12" r="4.5" fill="#555" stroke="#222"/><circle cx="46" cy="10.5" r="1.5" fill="#ddd"/>
<path d="M66 10 L73 6 L81 9 L81 18 L73 21 L66 18 Z" fill="url(#chk)" stroke="#000"/>
<path d="M66 10 L73 6 L81 9 L74 12 Z" fill="#fff" stroke="#000" stroke-width=".8"/>
<path d="M73.5 12V21M73.5 12L81 9" stroke="#000" stroke-width=".8"/>
<g shape-rendering="crispEdges"><path d="M88.5 5V20M163.5 5V20" stroke="#aca899"/><path d="M89.5 5V20M164.5 5V20" stroke="#fff"/></g>
<g transform="translate(98.5 14.5) rotate(-45) scale(.82)"><path d="M-3 4.5V0A3 3 0 0 1 3 0V4.5" fill="none" stroke="#8a0a0a" stroke-width="2.8"/><path d="M-4.4 4.5h2.8v1.2h-2.8zM1.6 4.5h2.8v1.2h-2.8z" fill="#fff"/><path d="M-4.4 5.7h2.8v1.5h-2.8zM1.6 5.7h2.8v1.5h-2.8z" fill="#000"/></g><g transform="translate(121.5 14.5) rotate(-45) scale(.82)"><path d="M-3 4.5V0A3 3 0 0 1 3 0V4.5" fill="none" stroke="#8a0a0a" stroke-width="2.8"/><path d="M-4.4 4.5h2.8v1.2h-2.8zM1.6 4.5h2.8v1.2h-2.8z" fill="#fff"/><path d="M-4.4 5.7h2.8v1.5h-2.8zM1.6 5.7h2.8v1.5h-2.8z" fill="#000"/></g><g transform="translate(145.5 14.5) rotate(-45) scale(.82)"><path d="M-3 4.5V0A3 3 0 0 1 3 0V4.5" fill="none" stroke="#8a0a0a" stroke-width="2.8"/><path d="M-4.4 4.5h2.8v1.2h-2.8zM1.6 4.5h2.8v1.2h-2.8z" fill="#fff"/><path d="M-4.4 5.7h2.8v1.5h-2.8zM1.6 5.7h2.8v1.5h-2.8z" fill="#000"/></g><g transform="translate(174.5 14.5) rotate(-45) scale(.82)"><path d="M-3 4.5V0A3 3 0 0 1 3 0V4.5" fill="none" stroke="#8a0a0a" stroke-width="2.8"/><path d="M-4.4 4.5h2.8v1.2h-2.8zM1.6 4.5h2.8v1.2h-2.8z" fill="#fff"/><path d="M-4.4 5.7h2.8v1.5h-2.8zM1.6 5.7h2.8v1.5h-2.8z" fill="#000"/></g><g font-family="Liberation Sans" font-weight="bold" font-size="9" fill="#000"><text x="103" y="11">3</text><text x="148" y="12.5">%</text></g><path d="M125 20.5h9M129 10.5L134 3.5M128.5 9 l4 11" stroke="#000" stroke-width="1" fill="none"/><path d="M127 8l3 -1 0 3zM131 20l2.5 -3h-4z" fill="#000"/>
<rect x="179.5" y="5.5" width="6" height="12" fill="#ECE9D8" stroke="#aca899"/><path d="M180.5 9.5h4L182.5 7zM180.5 13.5h4L182.5 16z" fill="#000"/>
</svg>
<div class="bt" style="left:753px;top:691px;width:48px;height:44px;line-height:45px;font-size:11.5px;border-color:#fff #716f64 #716f64 #fff;box-shadow:inset -1px -1px 0 #aca899">Animate</div>
<!-- playback -->
<svg class="a" style="left:800px;top:686px" width="224" height="52">
<g shape-rendering="crispEdges"><path d="M28.5 10V22M100.5 10V22M126.5 10V22M28.5 30V46M101.5 30V46M126.5 30V46" stroke="#aca899"/><path d="M29.5 10V22M101.5 10V22M127.5 10V22M29.5 30V46M102.5 30V46M127.5 30V46" stroke="#fff"/></g>
<g fill="#2a2a2a">
<path d="M7 11h2v9h-2zM9 15.5L16 11V20zM16 15.5L23 11V20z"/>
<path d="M35 15.5L41 11V20zM42 11h3v9h-3z"/>
<path d="M82 11h3v9h-3zM86 11L92 15.5L86 20z"/>
<path d="M105 11L112 15.5L105 20zM112 11L119 15.5L112 20zM119 11h2v9h-2z"/>
<path d="M63 11L70 15.5L63 20z"/>
</g>
<rect x="57.5" y="9.5" width="14" height="13" fill="none" stroke="#000" stroke-width="1.4"/>
<path d="M73 24h2v-2h-1v1h-1z" fill="#000"/>
<circle cx="8" cy="34" r="3" fill="none" stroke="#000" stroke-width="2"/><path d="M11 34h12M17 34v3M21 34v3" stroke="#000" stroke-width="2"/>
<rect x="107.5" y="33.5" width="11" height="9" fill="#fff" stroke="#000"/><rect x="107.5" y="31.5" width="11" height="3" fill="#000"/>
<circle cx="118" cy="41" r="4" fill="#fff" stroke="#d01010" stroke-width="1.3"/><path d="M118 38.5v3h2" stroke="#d01010" fill="none"/>
<!-- zoom icons -->
<circle cx="137" cy="13.5" r="4.5" fill="#e8f0ff" stroke="#2040a0" stroke-width="1.5"/><path d="M140 17 L145 22" stroke="#2030a0" stroke-width="2.2"/>
<g shape-rendering="crispEdges"><rect x="161.5" y="8.5" width="9" height="11" fill="#ddd" stroke="#a01010"/><path d="M161 14h10M166 8v12" stroke="#a01010"/></g>
<circle cx="160" cy="17" r="4" fill="#e8f0ff" stroke="#2040a0" stroke-width="1.4"/><path d="M163 20 L167 23" stroke="#2030a0" stroke-width="2"/>
<path d="M181 13 L185 10 L193 10 L193 18 L189 21 L181 21 Z" fill="#b8c0d8" stroke="#1a2a80"/><path d="M181 13h8v8M189 13l4-3" fill="none" stroke="#1a2a80"/>
<path d="M177 10v-3h3M194 7h3v3M177 22v3h3M197 22v3h-3" fill="none" stroke="#000"/>
<g shape-rendering="crispEdges"><rect x="207.5" y="7.5" width="9" height="10" fill="#ddd" stroke="#a01010"/><path d="M207 12.5h10M212 7v11" stroke="#a01010"/></g>
<path d="M201 14 L204 12 L210 12 L210 19 L207 21 L201 21 Z" fill="#c0c8e0" stroke="#1a2a80"/>
<path d="M218 24h2v-2h-1v1h-1zM194 24h2v-2h-1v1h-1z" fill="#000"/>
<g shape-rendering="crispEdges"><path d="M131 30h2M135 30h2M139 30h2M143 30h2M131 46h2M135 46h2M139 46h2M143 46h2M131 30v2M131 34v2M131 38v2M131 42v2M146 30v2M146 34v2M146 38v2M146 42v2" stroke="#000"/></g>
<circle cx="137" cy="36" r="3.5" fill="#e8f0ff" stroke="#2040a0" stroke-width="1.3"/><path d="M139.5 38.5 L143 42" stroke="#2030a0" stroke-width="2"/>
<path d="M157 40 L155 35 L157 34 L159 37 L159 30 L161 30 L162 35 L162 29 L164 29 L165 35 L165 30 L167 30 L168 36 L169 33 L171 34 L169 42 L165 46 L159 46 Z" fill="#f4f4f4" stroke="#303030" stroke-width="1"/>
<circle cx="185" cy="38" r="5" fill="#b8b8c8" stroke="#303040"/><path d="M185 28v20M176 41l18-6" stroke="#000" stroke-width="1" fill="none"/><path d="M176 44l3 1-2 2z" fill="#000"/>
<path d="M194 47h2v-2h-1v1h-1z" fill="#000"/>
<rect x="201.5" y="30.5" width="10" height="10" fill="#fff" stroke="#1a2aa0" stroke-width="1.3"/><rect x="206.5" y="35.5" width="10" height="10" fill="none" stroke="#000" stroke-width="1"/><path d="M203 32l6 6M203 32h3M203 32v3" stroke="#000" stroke-width=".8"/>
</svg>
<div class="fld" style="left:831px;top:714px;width:68px;height:21px;line-height:18px">0</div>

</body></html>
